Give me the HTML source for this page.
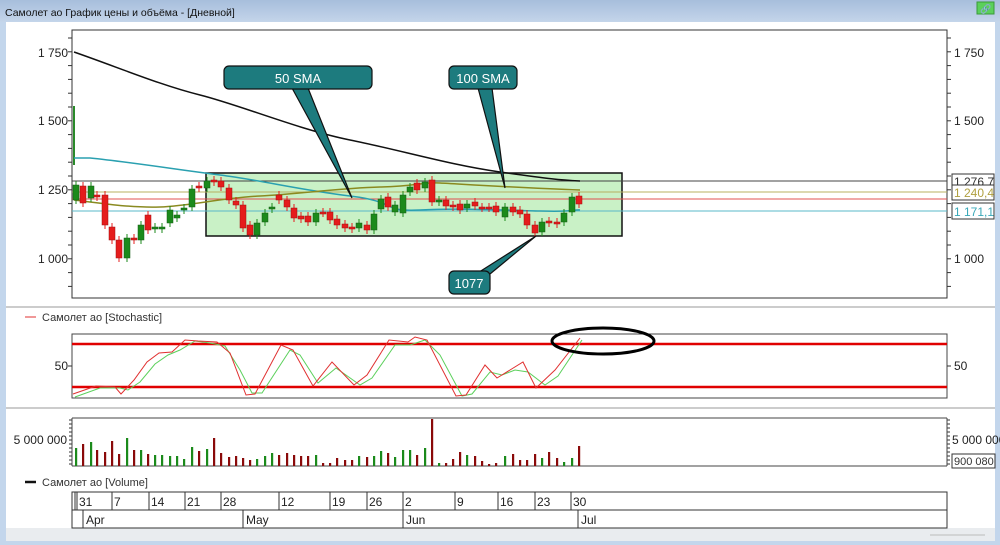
<!DOCTYPE html>
<html><head><meta charset="utf-8"><style>
html,body{margin:0;padding:0;width:1000px;height:545px;overflow:hidden;background:#fff}
svg{display:block}
text{font-family:"Liberation Sans","DejaVu Sans",sans-serif}
</style></head><body>
<svg id="s" width="1000" height="545" viewBox="0 0 1000 545" xmlns="http://www.w3.org/2000/svg">
<defs><linearGradient id="tb" x1="0" y1="0" x2="0" y2="1"><stop offset="0" stop-color="#a7bedc"/><stop offset="1" stop-color="#c4d5ea"/></linearGradient></defs>
<rect x="0" y="0" width="1000" height="545" fill="#c3d6ec"/>
<rect x="0" y="0" width="1000" height="22" fill="url(#tb)"/>
<text x="5" y="16" font-size="10.5" fill="#111">Самолет ао График цены и объёма - [Дневной]</text>
<rect x="977" y="2" width="17" height="12" fill="#5bd05b" stroke="#3a9a3a"/>
<text x="980" y="12" font-size="9" fill="#222">&#x1F517;</text>
<rect x="6" y="22" width="989" height="519" fill="#fff"/>
<rect x="6" y="528" width="989" height="13" fill="#e9ecef"/>
<line x1="930" y1="535" x2="985" y2="535" stroke="#bbb"/>
<!-- main frame -->
<rect x="72" y="30" width="875" height="268" fill="#fff" stroke="#333" stroke-width="1"/>
<line x1="6" y1="307" x2="995" y2="307" stroke="#ccc" stroke-width="2"/>
<line x1="6" y1="408" x2="995" y2="408" stroke="#ccc" stroke-width="2"/>
<g font-size="12" fill="#222">
<text x="68" y="57" text-anchor="end">1 750</text>
<text x="68" y="125" text-anchor="end">1 500</text>
<text x="68" y="194" text-anchor="end">1 250</text>
<text x="68" y="263" text-anchor="end">1 000</text>
<text x="954" y="57">1 750</text>
<text x="954" y="125">1 500</text>
<text x="954" y="263">1 000</text>
</g>
<g id="ticks" stroke="#333"></g>
<!-- green range box -->
<rect x="206" y="173" width="416" height="63" fill="#c9f1c6" stroke="#111" stroke-width="1.5"/>
<!-- horizontal levels -->
<line x1="72" y1="181" x2="947" y2="181" stroke="#444"/>
<line x1="72" y1="192" x2="947" y2="192" stroke="#b8b060"/>
<line x1="72" y1="199" x2="947" y2="199" stroke="#e05050"/>
<line x1="72" y1="211" x2="947" y2="211" stroke="#5ab8c8"/>
<rect x="952" y="174" width="42" height="14" fill="#fff" stroke="#333"/>
<text x="954" y="186" font-size="12" fill="#333">1 276,7</text>
<rect x="952" y="185" width="42" height="15" fill="#fff" stroke="#333"/>
<text x="954" y="197" font-size="12" fill="#b0a040">1 240,4</text>
<rect x="952" y="203" width="42" height="16" fill="#fff" stroke="#333"/>
<text x="954" y="216" font-size="12" fill="#3aa8b8">1 171,1</text>
<line x1="74" y1="106" x2="74" y2="165" stroke="#2a8a2a" stroke-width="2"/>
<!-- SMAs -->
<path d="M74,52 C120,68 160,85 200,95 S300,130 350,140 S450,165 500,172 S560,180 580,181" fill="none" stroke="#111" stroke-width="1.5"/>
<path d="M74,158 L90,158 C130,162 180,170 220,175 S300,190 350,196 S380,212 420,210 S500,210 540,211 S575,209 580,210" fill="none" stroke="#2aa0b0" stroke-width="1.5"/>
<path d="M74,200 C100,203 130,208 160,207 S220,198 260,196 S340,188 380,187 S420,182 440,183 S520,188 580,190" fill="none" stroke="#8a8a20" stroke-width="1.5"/>
<g id="candles"></g>
<!-- callouts -->
<g fill="#1d7b7e" stroke="#111" stroke-width="1.2">
<polygon points="292,88 308,88 352,198"/>
<rect x="224" y="66" width="148" height="23" rx="5"/>
<polygon points="478,88 492,88 505,188"/>
<rect x="449" y="66" width="68" height="23" rx="5"/>
<polygon points="476,274 490,274 536,236"/>
<rect x="449" y="271" width="41" height="23" rx="5"/>
</g>
<g font-size="13" fill="#fff" text-anchor="middle">
<text x="298" y="83">50 SMA</text>
<text x="483" y="83">100 SMA</text>
<text x="469" y="288">1077</text>
</g>
<!-- stochastic -->
<line x1="25" y1="317" x2="36" y2="317" stroke="#e03030"/>
<text x="42" y="321" font-size="11" fill="#333">Самолет ао [Stochastic]</text>
<rect x="72" y="334" width="875" height="64" fill="#fff" stroke="#444"/>
<line x1="72" y1="344" x2="947" y2="344" stroke="#e00000" stroke-width="2.5"/>
<line x1="72" y1="387" x2="947" y2="387" stroke="#e00000" stroke-width="2.5"/>
<text x="68" y="370" font-size="12" fill="#222" text-anchor="end">50</text>
<text x="954" y="370" font-size="12" fill="#222">50</text>
<line x1="68" y1="366" x2="72" y2="366" stroke="#333"/><line x1="947" y1="366" x2="951" y2="366" stroke="#333"/>
<polyline fill="none" stroke="#5cd05c" stroke-width="1" points="75,397 100,388 120,388 128,390 140,382 155,364 168,355 180,350 195,341 210,343 225,346 240,370 252,393 262,393 290,350 300,355 318,383 336,368 360,385 372,378 395,345 410,345 425,340 440,355 462,396 472,394 490,372 502,375 515,370 528,372 545,385 558,376 582,340"/>
<polyline fill="none" stroke="#e03030" stroke-width="1" points="73,394 96,386 115,387 121,394 134,380 147,362 159,353 172,352 185,340 198,341 217,342 230,353 246,395 255,394 281,345 293,350 313,386 332,362 354,385 367,375 389,340 408,342 415,337 427,340 456,396 466,395 485,365 497,378 510,370 523,362 536,388 555,370 580,338"/>
<ellipse cx="603" cy="341" rx="51" ry="13" fill="none" stroke="#000" stroke-width="3"/>
<!-- volume -->
<line x1="72" y1="418" x2="947" y2="418" stroke="#444"/>
<line x1="72" y1="418" x2="72" y2="466" stroke="#444"/>
<line x1="947" y1="418" x2="947" y2="466" stroke="#444"/>
<line x1="72" y1="466" x2="947" y2="466" stroke="#444"/>
<text x="67" y="444" font-size="12" fill="#222" text-anchor="end">5 000 000</text>
<text x="952" y="444" font-size="12" fill="#222">5 000 000</text>
<rect x="952" y="454" width="43" height="14" fill="#fff" stroke="#333"/>
<text x="954" y="465" font-size="11" fill="#333">900 080</text>
<g id="vol"></g>
<line x1="25" y1="482" x2="36" y2="482" stroke="#111" stroke-width="2.5"/>
<text x="42" y="486" font-size="11" fill="#333">Самолет ао [Volume]</text>
<!-- date axis -->
<g stroke="#333" fill="none">
<rect x="72" y="492" width="875" height="36"/>
<line x1="72" y1="510" x2="947" y2="510"/>
<line x1="75" y1="492" x2="75" y2="510"/>
<line x1="77" y1="492" x2="77" y2="510"/>
<line x1="112" y1="492" x2="112" y2="510"/><line x1="149" y1="492" x2="149" y2="510"/><line x1="185" y1="492" x2="185" y2="510"/><line x1="221" y1="492" x2="221" y2="510"/><line x1="279" y1="492" x2="279" y2="510"/><line x1="330" y1="492" x2="330" y2="510"/><line x1="367" y1="492" x2="367" y2="510"/><line x1="403" y1="492" x2="403" y2="510"/><line x1="455" y1="492" x2="455" y2="510"/><line x1="498" y1="492" x2="498" y2="510"/><line x1="535" y1="492" x2="535" y2="510"/><line x1="571" y1="492" x2="571" y2="510"/>
<line x1="83" y1="510" x2="83" y2="528"/><line x1="243" y1="510" x2="243" y2="528"/><line x1="403" y1="510" x2="403" y2="528"/><line x1="578" y1="510" x2="578" y2="528"/>
</g>
<g font-size="12" fill="#222">
<text x="79" y="506">31</text><text x="114" y="506">7</text><text x="151" y="506">14</text><text x="187" y="506">21</text><text x="223" y="506">28</text><text x="281" y="506">12</text><text x="332" y="506">19</text><text x="369" y="506">26</text><text x="405" y="506">2</text><text x="457" y="506">9</text><text x="500" y="506">16</text><text x="537" y="506">23</text><text x="573" y="506">30</text>
<text x="86" y="524">Apr</text><text x="246" y="524">May</text><text x="406" y="524">Jun</text><text x="581" y="524">Jul</text>
</g>
</svg>
<script>
(function(){
var NS="http://www.w3.org/2000/svg";
function el(p,t,a){var e=document.createElementNS(NS,t);for(var k in a)e.setAttribute(k,a[k]);p.appendChild(e);return e;}
var tk=document.getElementById("ticks");
for(var y=38;y<298;y+=13.8){el(tk,"line",{x1:68,y1:y,x2:72,y2:y});el(tk,"line",{x1:947,y1:y,x2:951,y2:y});}
for(var y=420;y<466;y+=4){el(tk,"line",{x1:69,y1:y,x2:72,y2:y});el(tk,"line",{x1:947,y1:y,x2:950,y2:y});}
// x, color(g/r), top, bottom
var c=[[76,'g',185,200],[83,'r',186,203],[91,'g',186,198],[97,'r',195,197],[105,'r',195,225],[112,'r',227,240],[119,'r',240,258],[127,'g',238,258],[134,'r',238,240],[141,'g',225,240],[148,'r',215,230],[155,'g',227,229],[162,'g',227,229],[170,'g',210,223],[177,'g',215,218],[184,'g',208,210],[192,'g',189,207],[199,'r',186,188],[207,'g',181,188],[214,'r',180,182],[221,'r',181,187],[229,'r',188,200],[236,'r',201,205],[243,'r',205,228],[250,'r',225,235],[257,'g',223,235],[265,'g',213,222],[272,'g',207,209],[279,'r',195,200],[287,'r',200,207],[294,'r',208,218],[301,'r',216,219],[308,'r',216,222],[316,'g',213,222],[323,'r',212,213],[330,'r',212,220],[337,'r',219,225],[345,'r',224,228],[352,'r',227,229],[359,'g',223,228],[367,'r',225,230],[374,'g',214,230],[381,'g',199,209],[388,'r',197,207],[395,'g',205,212],[403,'g',195,213],[410,'g',187,192],[417,'r',183,190],[425,'g',182,188],[432,'r',180,202],[439,'g',200,202],[446,'r',200,206],[453,'r',205,207],[460,'r',204,210],[467,'g',204,208],[475,'r',202,206],[482,'r',207,208],[489,'r',207,208],[496,'r',206,212],[505,'g',207,217],[513,'r',207,212],[520,'r',210,214],[527,'r',214,225],[535,'r',225,233],[542,'g',222,232],[549,'r',221,223],[557,'r',222,224],[564,'g',213,222],[572,'g',197,212],[579,'r',196,204]];
var cg=document.getElementById("candles"),vg=document.getElementById("vol");
var vh=[18,22,24,16,14,25,12,28,16,16,12,11,11,10,10,7,19,15,17,28,13,9,10,8,6,7,10,13,11,13,11,10,10,11,3,3,8,6,6,10,9,10,15,13,9,16,16,11,18,47,3,3,7,14,11,10,5,2,3,10,12,6,6,12,8,14,8,4,8,20,6];
for(var i=0;i<c.length;i++){var d=c[i];var col=d[1]=='g'?'#1b8a1b':'#e51c1c';
el(cg,"line",{x1:d[0],y1:d[2]-4,x2:d[0],y2:d[3]+4,stroke:col,"stroke-width":1});
el(cg,"rect",{x:d[0]-3,y:d[2],width:6,height:Math.max(2,d[3]-d[2]),fill:col,stroke:d[1]=='g'?'#145a14':'#a01010',"stroke-width":0.5});
var h=vh[i]||8;el(vg,"rect",{x:d[0]-1,y:466-h,width:2.2,height:h,fill:d[1]=='g'?'#1b8a1b':'#8a0a0a'});}
})();
</script>
</body></html>
